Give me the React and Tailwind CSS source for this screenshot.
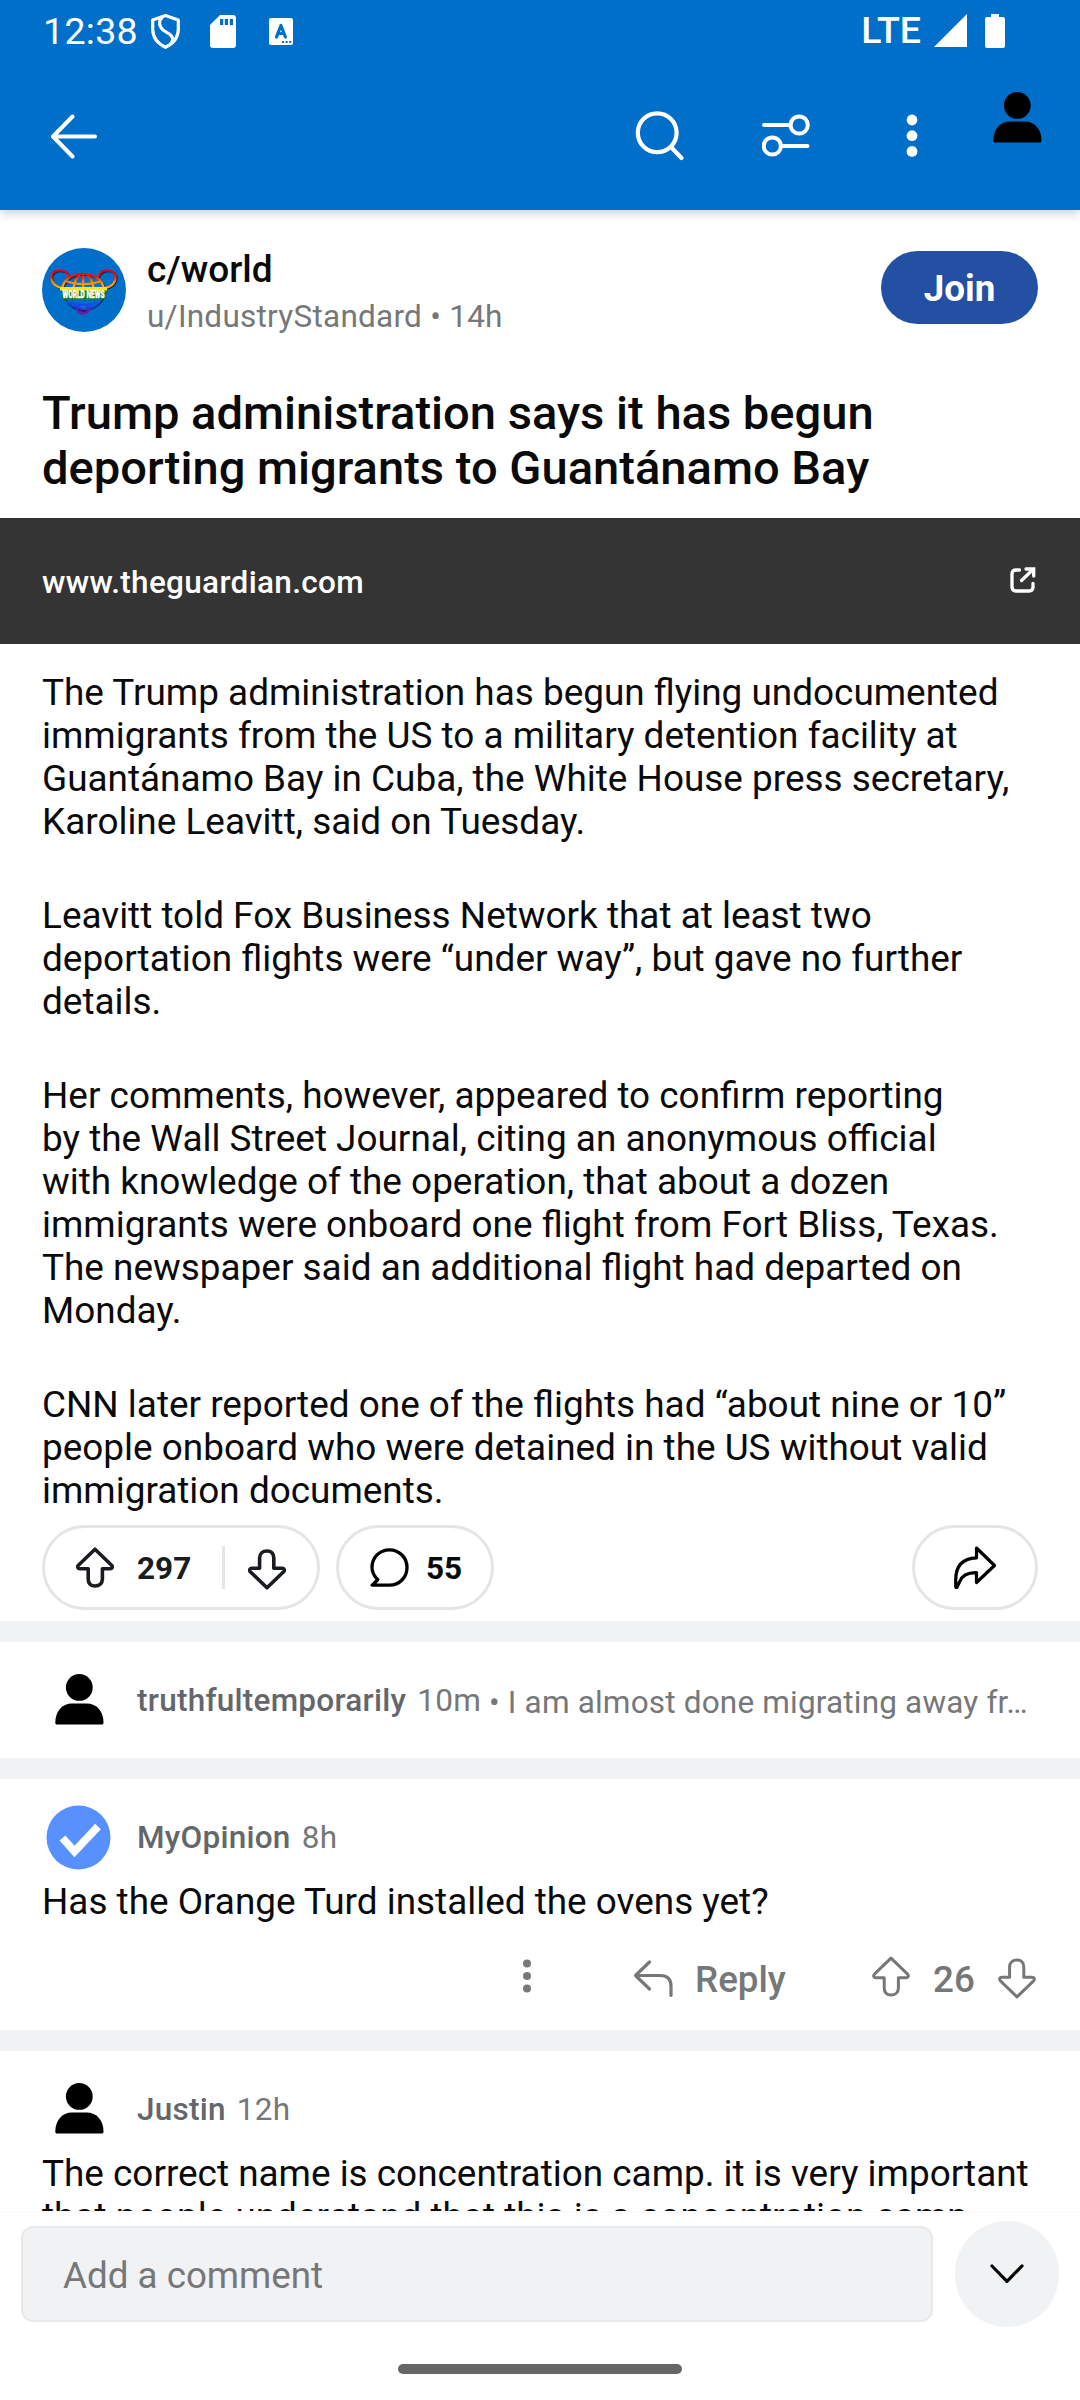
const Person = ({ className }) => (
  <svg className={className} width="49" height="51" viewBox="0 0 49 51" fill="#000">
    <circle cx="24.3" cy="13.4" r="13.4" />
    <path d="M17 29.5H31.5C42 29.5 48.5 37.5 48.5 48.5C48.5 50 48 50.6 46.5 50.6H2.2C.8 50.6.3 50 .3 48.5C.3 37.5 7 29.5 17 29.5Z" />
  </svg>
);

const VoteArrow = ({ down, color, width = 3.6 }) => (
  <svg width="38" height="41" viewBox="0 0 38 41" fill="none" stroke={color} strokeWidth={width} strokeLinejoin="round" className={down ? "rotate-180" : ""}>
    <path d="M19 2.2L35.6 18.2C37 19.8 36.3 21.8 34 21.8H26.4V32C26.4 36.500 23.200 39 19 39S12.200 36.500 12.200 32V21.8H4C1.700 21.800 1 19.800 2.400 18.200Z" />
  </svg>
);

const WorldLogo = () => (
  <svg width="84" height="84" viewBox="0 0 84 84">
    <defs>
      <linearGradient id="rainbow" x1="0" y1="22" x2="0" y2="66" gradientUnits="userSpaceOnUse">
        <stop offset="0.05" stopColor="#e60014" />
        <stop offset="0.16" stopColor="#f02010" />
        <stop offset="0.27" stopColor="#ff8a00" />
        <stop offset="0.42" stopColor="#ffb000" />
        <stop offset="0.46" stopColor="#ffe800" />
        <stop offset="0.54" stopColor="#ffe800" />
        <stop offset="0.57" stopColor="#0a8a20" />
        <stop offset="0.68" stopColor="#067a2c" />
        <stop offset="0.73" stopColor="#1050f0" />
        <stop offset="0.86" stopColor="#1c3ce0" />
        <stop offset="0.94" stopColor="#7a14a0" />
      </linearGradient>
    </defs>
    <circle cx="42" cy="42" r="42" fill="#006fca" />
    <g fill="none" stroke="#10203a" strokeWidth="2" transform="translate(1 1)">
      <path d="M20 42C21 32 29 26 41 26S61 32 62 42C62 53 52 60 41 62C30 60 20 53 20 42Z" />
      <path d="M27 29C25 22 17 21 12 24C7 28 9 38 20 40M56 29C58 22 66 21 71 24C76 28 74 38 63 40" />
    </g>
    <g fill="none" stroke="url(#rainbow)" strokeWidth="2.200">
      <path d="M20 42C21 32 29 26 41 26S61 32 62 42" />
      <path d="M20 46C22 54 30 60 41 61.500S60 54 62 46" strokeWidth="1.500" />
      <path d="M27 29C25 22 17 21 12 24C7 28 9 38 20 40M56 29C58 22 66 21 71 24C76 28 74 38 63 40" />
      <path d="M24 33C34 37 49 37 59 33M31 42C32 35 35 29 38 27M41.200 26V42M52 42C51 35 48 29 45 27" />
      <path d="M30 52C31 57 36 60 40 61M53 52C51 57 47 60 43 61M24 54C34 57 49 57 58 54M41.200 52V58" strokeWidth="1.400" />
      <ellipse cx="41" cy="61" rx="6" ry="4.500" />
    </g>
    <path d="M18 39H65V43L63 51H21Z" fill="#0b7a22" />
    <path d="M18 39H65V42.500H18Z" fill="#ffe800" />
    <text x="20.500" y="49.500" textLength="42" lengthAdjust="spacingAndGlyphs" fontFamily="Roboto, sans-serif" fontWeight="900" fontSize="10.500" fill="#fff" stroke="#fff" strokeWidth=".4">WORLD NEWS</text>
  </svg>
);

const paragraphs = [
  ["The Trump administration has begun flying undocumented", "immigrants from the US to a military detention facility at", "Guantánamo Bay in Cuba, the White House press secretary,", "Karoline Leavitt, said on Tuesday."],
  ["Leavitt told Fox Business Network that at least two", "deportation flights were “under way”, but gave no further", "details."],
  ["Her comments, however, appeared to confirm reporting", "by the Wall Street Journal, citing an anonymous official", "with knowledge of the operation, that about a dozen", "immigrants were onboard one flight from Fort Bliss, Texas.", "The newspaper said an additional flight had departed on", "Monday."],
  ["CNN later reported one of the flights had “about nine or 10”", "people onboard who were detained in the US without valid", "immigration documents."],
];

const Divider = () => <div className="h-[21px] shrink-0 bg-[#f1f2f4]" />;

function StatusBar() {
  return (
    <div className="flex h-[62px] pl-[43px] pr-[75px] text-white">
      <span className="mt-[9px] w-[108px] text-[37.500px] leading-[44px] tracking-[0.300px]">12:38</span>
      <svg className="mt-[14px]" width="29" height="35" viewBox="0 0 29 35" fill="none" stroke="#fff" strokeWidth="3.200" strokeLinejoin="round">
        <path d="M14.500 1.600L27.300 6V15C27.300 23.500 22.500 29.500 14.500 33.300C6.500 29.500 1.700 23.500 1.700 15V6Z" />
        <path d="M11.500 3C7.500 6.500 7.500 12 12 16L19 20.500C22.500 23.500 22.500 26.500 19.500 30" />
      </svg>
      <svg className="ml-[30px] mt-[15px]" width="26" height="33" viewBox="0 0 26 33">
        <path d="M10 0H23Q26 0 26 3V30Q26 33 23 33H3Q0 33 0 30V10Z" fill="#fff" />
        <path d="M10 4h3.200v6H10zM14.800 4H18v6h-3.200zM19.800 4H23v6h-3.200z" fill="#006fca" />
      </svg>
      <svg className="ml-[33px] mt-[18px]" width="24" height="27" viewBox="0 0 24 27">
        <rect width="24" height="27" rx="2" fill="#fff" />
        <path d="M7.500 19L11.900 7.500L16.400 19M9.200 15.500H14.800" fill="none" stroke="#006fca" strokeWidth="3.200" strokeLinecap="round" strokeLinejoin="round" />
        <path d="M13 23h2v2h-2zM16.600 23h2v2h-2zM20.200 23h2v2h-2z" fill="#006fca" />
      </svg>
      <span className="ml-auto mt-[8px] text-[37.500px] font-medium leading-[44px]">LTE</span>
      <svg className="ml-[13px] mt-[14px]" width="33" height="33" viewBox="0 0 33 33" fill="#fff"><path d="M33 0V33H0Z" /></svg>
      <svg className="ml-[18px] mt-[14px]" width="20" height="34" viewBox="0 0 20 34" fill="#fff"><path d="M6 0H14V3H18Q20 3 20 5V32Q20 34 18 34H2Q0 34 0 32V5Q0 3 2 3H6Z" /></svg>
    </div>
  );
}

function AppBar() {
  return (
    <div className="flex h-[148px] items-start pl-[50px] pr-[38px]">
      <svg className="mt-[51px]" width="47" height="46" viewBox="0 0 47 46" fill="none" stroke="#fff" strokeWidth="4" strokeLinecap="round" strokeLinejoin="round"><path d="M22.500 3.500L3 23.500L22.500 43.500M3 23.500H45" /></svg>
      <svg className="ml-auto mt-[48px]" width="50" height="52" viewBox="0 0 50 52" fill="none" stroke="#fff" strokeWidth="4.200" strokeLinecap="round"><circle cx="22.200" cy="22.700" r="19.400" /><path d="M36.500 37.500L46.500 48" /></svg>
      <svg className="ml-[77px] mt-[51px]" width="49" height="46" viewBox="0 0 49 46" fill="none" stroke="#fff" strokeWidth="4" strokeLinecap="round"><circle cx="37.200" cy="12" r="8.600" /><circle cx="10.300" cy="33" r="8.600" /><path d="M2 12H28M19.500 33H45.500" /></svg>
      <svg className="ml-[95px] mt-[51px]" width="12" height="46" viewBox="0 0 12 46" fill="#fff"><circle cx="6" cy="7" r="5.400" /><circle cx="6" cy="22.700" r="5.400" /><circle cx="6" cy="38.400" r="5.400" /></svg>
      <Person className="ml-[75px] mt-[30px]" />
    </div>
  );
}

function Post() {
  return (
    <article className="flex h-[1411px] shrink-0 flex-col">
      <div className="flex h-[166px] px-[42px] pt-[38px]">
        <WorldLogo />
        <div className="ml-[21px] flex flex-col">
          <span className="text-[37px] font-medium leading-[43px]">c/world</span>
          <span className="mt-[4px] text-[31.500px] leading-[44px] tracking-[0.260px] text-[#757779]">u/IndustryStandard • 14h</span>
        </div>
        <button className="ml-auto mt-[3px] h-[73px] w-[157px] rounded-full bg-[#2450a4] pt-[3px] text-[36.750px] font-bold leading-[70px] text-white">Join</button>
      </div>
      <h1 className="h-[142px] whitespace-nowrap px-[42px] pt-[9px] text-[47.100px] font-medium leading-[55px]">Trump administration says it has begun<br />deporting migrants to Guantánamo Bay</h1>
      <div className="flex h-[126px] items-center bg-[#343434] px-[42px] text-white">
        <span className="mt-[3px] text-[31.500px] font-medium tracking-[0.320px]">www.theguardian.com</span>
        <svg className="ml-auto mr-[2px] -mt-[2px]" width="26" height="26" viewBox="0 0 26 26" fill="none" stroke="#fff" strokeWidth="3.300" strokeLinecap="round"><path d="M9.500 3H6Q2 3 2 7V20Q2 24 6 24H19Q23 24 23 20V16.500M11.500 13.500L22.500 3M16 2H23.700V9" /></svg>
      </div>
      <div className="flex flex-col gap-[50.600px] px-[42px] pt-[27px]">
        {paragraphs.map((lines) => (
          <p key={lines[0]} className="whitespace-nowrap text-[36.920px] leading-[43.070px]">
            {lines.map((line) => <span key={line} className="block">{line}</span>)}
          </p>
        ))}
      </div>
      <div className="mb-[11px] mt-auto flex h-[85px] px-[42px] text-[31.500px] font-bold">
        <div className="flex w-[278px] items-center rounded-full border-[3px] border-[#e5e5e5] pl-[31px] text-[#191c20]">
          <VoteArrow color="#191c20" />
          <span className="ml-[23px] mt-[3px] w-[85px]">297</span>
          <span className="h-[43px] w-[3px] bg-[#e5e5e5]" />
          <span className="ml-[23px] mt-[3px]"><VoteArrow down color="#191c20" /></span>
        </div>
        <div className="ml-[16px] flex w-[158px] items-center rounded-full border-[3px] border-[#e5e5e5] pl-[31px]">
          <svg width="39" height="39" viewBox="0 0 39 39" fill="none" stroke="#000" strokeWidth="3.300" strokeLinejoin="round"><path d="M19.500 37.200C29.500 37.200 37 29.300 37 19.500S29.500 1.800 19.500 1.800S2 9.500 2 19.500C2 24.500 4.300 28.300 7.800 31.700L2.200 37.200Z" /></svg>
          <span className="ml-[17px] mt-[3px]">55</span>
        </div>
        <div className="ml-auto flex w-[126px] items-center justify-center rounded-full border-[3px] border-[#e5e5e5]">
          <svg width="42" height="43" viewBox="0 0 42 43" fill="none" stroke="#000" strokeWidth="3.200" strokeLinejoin="round"><path d="M22.500 2L40.500 19.500L22.500 36.500V26.700C13 26.500 8 29.500 5.500 36L2.800 41.500Q1.500 42 1.700 39V34C1.700 19 9 12.200 22.500 11.800Z" /></svg>
        </div>
      </div>
    </article>
  );
}

const CommentText = ({ children }) => <p className="ml-[42px] whitespace-nowrap text-[36.900px] leading-[43px]">{children}</p>;

function Author({ name, time }) {
  return (
    <>
      <span className="font-medium tracking-[0.250px] text-[#63676b]">{name}</span>
      <span className="ml-[11px] tracking-[0.300px]">{time}</span>
    </>
  );
}

export default function App() {
  return (
    <div className="flex h-[2400px] w-[1080px] flex-col overflow-hidden bg-white font-['Roboto',sans-serif] text-[#0a0a0a]">
      <header className="relative h-[210px] shrink-0 bg-[#006fca] shadow-[0_3px_10px_rgba(0,0,0,0.2)]">
        <StatusBar />
        <AppBar />
      </header>
      <main className="flex h-[2001px] shrink-0 flex-col overflow-hidden">
        <Post />
        <Divider />
        <section className="flex h-[116px] shrink-0 items-start pl-[55px] text-[31.500px] leading-[37px] text-[#757779]">
          <Person className="mt-[32px]" />
          <div className="ml-[33px] mt-[40px] flex whitespace-nowrap">
            <Author name="truthfultemporarily" time="10m" />
            <span className="ml-[8px] mt-[2px] tracking-[0.180px]">• I am almost done migrating away fr…</span>
          </div>
        </section>
        <Divider />
        <section className="flex h-[251px] shrink-0 flex-col">
          <div className="flex h-[101px] pl-[46px] text-[31.500px] leading-[37px] text-[#757779]">
            <svg className="mt-[26px]" width="65" height="65" viewBox="0 0 65 65"><circle cx="32.500" cy="32.500" r="32" fill="#5790ff" /><path d="M16.500 33L28.500 46.500L52 21.500" fill="none" stroke="#fff" strokeWidth="7.800" /></svg>
            <div className="ml-[26px] mt-[40px]"><Author name="MyOpinion" time="8h" /></div>
          </div>
          <CommentText>Has the Orange Turd installed the ovens yet?</CommentText>
          <div className="ml-auto flex h-[107px] items-start pr-[44px] pt-[33px] text-[36.750px] font-medium leading-[43px] text-[#757779]">
            <svg className="mt-[2px]" width="10" height="36" viewBox="0 0 10 36" fill="#757779"><circle cx="5" cy="5.500" r="4" /><circle cx="5" cy="18" r="4" /><circle cx="5" cy="30.500" r="4" /></svg>
            <svg className="ml-[101px] mt-[3px]" width="40" height="39" viewBox="0 0 40 39" fill="none" stroke="#757779" strokeWidth="3.200" strokeLinecap="round" strokeLinejoin="round"><path d="M16.500 3L2.500 16.500L16.500 30M2.500 16.500H27Q38 16.500 38 27V36.500" /></svg>
            <span className="ml-[22px] mt-[2px] w-[177px]">Reply</span>
            <VoteArrow color="#757779" width={3} />
            <span className="ml-[23px] mt-[2px] w-[65px]">26</span>
            <span className="mt-[2px]"><VoteArrow down color="#757779" width={3} /></span>
          </div>
        </section>
        <Divider />
        <section className="h-[300px] shrink-0">
          <div className="flex h-[101px] items-start pl-[55px] text-[31.500px] leading-[37px] text-[#757779]">
            <Person className="mt-[32px]" />
            <div className="ml-[33px] mt-[40px]"><Author name="Justin" time="12h" /></div>
          </div>
          <CommentText>The correct name is concentration camp. it is very important<br />that people understand that this is a concentration camp.</CommentText>
        </section>
      </main>
      <footer className="flex h-[189px] shrink-0 flex-col border-t-2 border-[#fafafa] bg-white">
        <div className="flex items-start pl-[21px] pr-[21px] pt-[8px]">
          <div className="mt-[5px] h-[96px] w-[912px] rounded-[12px] border-2 border-[#e8e9eb] bg-[#f1f2f4] pl-[40px] pt-[2px] text-[36.750px] leading-[92px] text-[#757779]">Add a comment</div>
          <div className="ml-auto flex h-[106px] w-[104px] items-center justify-center rounded-full bg-[#f1f2f4]">
            <svg width="34" height="20" viewBox="0 0 34 20" fill="none" stroke="#000" strokeWidth="3.200" strokeLinecap="round" strokeLinejoin="round"><path d="M2 2L17 17.300L32 2" /></svg>
          </div>
        </div>
        <div className="mx-auto mb-[26px] mt-auto h-[10px] w-[284px] rounded-full bg-[#666]" />
      </footer>
    </div>
  );
}
